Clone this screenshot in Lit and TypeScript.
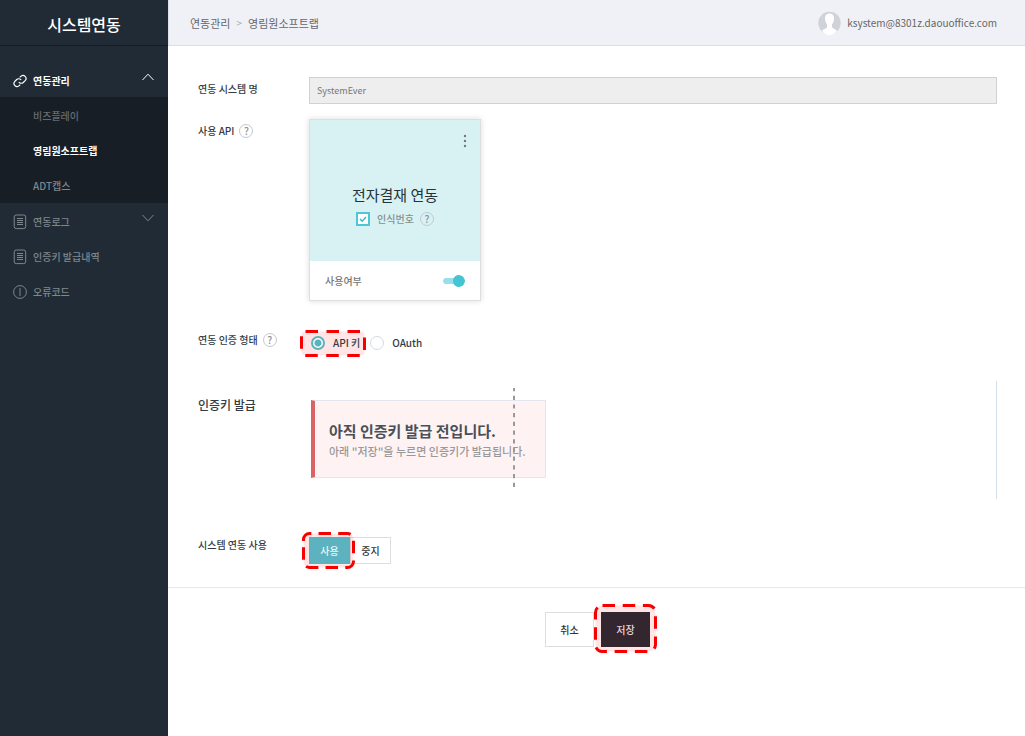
import { LitElement, html, css, svg } from "lit";
import { customElement, state } from "lit/decorators.js";

const docIcon = html`<svg class="ico" viewBox="0 0 14 16" width="14" height="16" aria-hidden="true">
  <rect x="1.2" y="1" width="11.5" height="13.6" rx="2"></rect>
  <path d="M4 4.500h6M4 6.500h6M4 8.500h6M4 10.500h6"></path></svg>`;

const linkIcon = html`<svg class="ico" viewBox="0 0 24 24" width="14" height="14" aria-hidden="true" stroke-width="2">
  <path d="M10 14a5.2 5.2 0 0 0 7.6.5l3.6-3.6a5.2 5.2 0 0 0-7.3-7.3l-2.4 2.3"></path>
  <path d="M14 10a5.2 5.2 0 0 0-7.6-.5l-3.6 3.6a5.2 5.2 0 0 0 7.3 7.3l2.4-2.3"></path></svg>`;

const errorIcon = html`<svg class="ico" viewBox="0 0 14 16" width="14" height="16" aria-hidden="true">
  <circle cx="7" cy="8" r="6.4"></circle><path d="M7 4v8"></path></svg>`;

const chevron = (up: boolean) => html`<svg class="chev" viewBox="0 0 12 8" width="12" height="8" aria-hidden="true">
  <path d=${up ? "M.5 7L6 1.2 11.5 7" : "M.5 1L6 6.8 11.5 1"}></path></svg>`;

// Dashed marker around a control: the outline may start on the left side or on the top side.
const ring = (w: number, h: number, r: number, start: "left" | "top", dash: string) => {
  const a = 1.5, x = w - 1.5, y = h - 1.5;
  const arc = (ex: number, ey: number) => `A${r} ${r} 0 0 1 ${ex} ${ey}`;
  const corner = `V${a + r}${arc(a + r, a)}`;
  const rest = `H${x - r}${arc(x, a + r)}V${y - r}${arc(x - r, y)}H${a + r}${arc(a, y - r)}`;
  const d = start === "left" ? `M${a} 9${corner}${rest}V9` : `M${a + r} ${a}${rest}${corner}`;
  return html`<svg class="ring" viewBox="0 0 ${w} ${h}" width=${w} height=${h} aria-hidden="true">${svg`
    <path d=${d} stroke-dasharray=${dash}></path>`}</svg>`;
};

@customElement("app-root")
export class AppRoot extends LitElement {
  @state() private system = "on";

  static styles = css`
    :host {
      display: block;
      font-family: "Noto Sans CJK KR", "Noto Sans", sans-serif;
      font-size: 10px;
      line-height: 16px;
      font-weight: 500;
      color: #333c46;
    }
    * { box-sizing: border-box; }
    button, input { font: inherit; margin: 0; }
    a { color: inherit; text-decoration: none; }
    h1, h2, p, ul { margin: 0; padding: 0; font-weight: inherit; }
    ul { list-style: none; }
    .page { display: grid; grid-template-columns: 168px 1fr; min-height: 100vh; }
    .side { background: #202b36; color: #7f878d; }
    .brand {
      height: 46px; padding-top: 3px; display: flex; align-items: center; justify-content: center;
      font-size: 16px; line-height: 24px; color: #fff; border-bottom: 1px solid #141c25;
    }
    .menu { padding-top: 16px; }
    .menu a { display: flex; align-items: center; gap: 6px; height: 35px; padding: 3px 14px 0 13px; }
    .menu .sub { padding-bottom: 1px; background: #171e26; }
    .menu .sub a { padding-left: 33px; }
    .menu .dim { color: #666c73; }
    .menu .on { color: #fff; font-weight: 700; }
    .ico { fill: none; stroke: currentColor; flex: none; }
    .chev { fill: none; stroke: currentColor; margin: 0 0 9px auto; }
    .top {
      height: 46px; padding: 0 28px 0 21px; display: flex; align-items: center; justify-content: space-between;
      background: #f0f1f7; border-bottom: 1px solid #dadeea; border-left: 1px solid #dfe2ea;
    }
    .crumbs { display: flex; gap: 6px; font-size: 11px; color: #62666e; font-weight: 400; }
    .crumbs i { font-style: normal; color: #aaa; font-size: 10px; }
    .user { display: flex; align-items: center; gap: 6px; color: #666; font-weight: 400; }
    .form { padding: 31px 28px 0 30px; }
    .row { display: grid; grid-template-columns: 111px 1fr; }
    .name { display: flex; align-items: center; gap: 5px; height: 24px; }
    .help {
      width: 14px; height: 14px; padding: 0; border: 1px solid #c4c8d2; border-radius: 50%; background: none;
      color: #8e9299; font-size: 10px; line-height: 12px; text-align: center;
    }
    .text {
      width: 100%; height: 27px; padding: 0 7px; border: 1px solid #d2d2d2; border-radius: 0;
      background: #eee; color: #777; font-size: 9px; font-weight: 400;
    }
    .api { margin-top: 15px; }
    .card { width: 172px; border: 1px solid #dcdfe2; box-shadow: 0 0 6px rgba(0, 0, 0, .14); background: #fff; }
    .face { height: 141px; background: #d8f2f4; display: flex; flex-direction: column; align-items: center; }
    .more { align-self: flex-end; border: 0; background: none; padding: 13px 12px 0; height: 63px; display: flex; }
    .face h2 { font-size: 15px; line-height: 24px; font-weight: 400; color: #26313a; }
    .check { display: flex; align-items: center; gap: 6px; height: 24px; color: #85908f; }
    .check label { display: flex; align-items: center; gap: 7px; }
    .tick {
      appearance: none; width: 14px; height: 14px; border: 2px solid #4cc7d6;
      background: #fff url('data:image/svg+xml,<svg xmlns="http://www.w3.org/2000/svg" viewBox="0 0 10 10"><path d="M2 5l2.2 2.2L8 3" fill="none" stroke="%2334bccd" stroke-width="1.5"/></svg>') center / 10px;
    }
    .use { display: flex; align-items: center; justify-content: space-between; height: 39px; padding: 0 15px; color: #777; }
    .switch {
      appearance: none; width: 22px; height: 12px; border-radius: 6px;
      background:
        radial-gradient(circle at 16px 6px, #43c5d4 5.6px, transparent 6.4px),
        linear-gradient(#96e1e9, #96e1e9) 3px 3px / 12px 6px no-repeat,
        radial-gradient(circle at 3px 6px, #96e1e9 2.7px, transparent 3.3px);
    }
    .auth { margin-top: 27px; }
    .radios { display: flex; align-items: center; height: 27px; margin-top: 1px; padding-left: 2px; gap: 10px; }
    .radios label { display: flex; align-items: center; gap: 8px; height: 20px; }
    .mark { position: relative; z-index: 1; display: flex; }
    .ring {
      position: absolute; z-index: -1; pointer-events: none; overflow: visible;
      fill: rgba(255, 0, 0, .1); stroke: #f80000; stroke-width: 3;
    }
    .radios .ring { left: -11px; top: -3px; }
    .radio {
      appearance: none; width: 14px; height: 14px; padding: 2px; border: 1px solid #d5d9df; border-radius: 50%; background: #fff;
    }
    .radio:checked { border: 2px solid #5bb3be; background: radial-gradient(circle at center, #5bb3be 3px, #fff 4px) border-box; }
    .issue { margin-top: 25px; height: 118px; padding-top: 12px; border-right: 1px solid #d3e0ea; }
    .issue .name { font-size: 12px; }
    .notice {
      position: relative; justify-self: start; margin: 7px 0 0 2px; width: 235px; height: 78px; padding: 19px 0 0 14px;
      background: #fff2f2; border: 1px solid #e2e6ee; border-left: 4px solid #dc6363;
    }
    .notice h2 { font-size: 15px; line-height: 22px; font-weight: 700; color: #4a5058; }
    .notice p { font-size: 11px; line-height: 18px; color: #999; }
    .guide { position: absolute; left: 198px; top: -13px; stroke: #999; stroke-width: 2; }
    .system { margin-top: 34px; }
    .seg { display: flex; margin-top: 4px; }
    .seg button { width: 41px; height: 27px; padding: 0; border: 1px solid #dedede; background: #fff; color: #333; }
    .seg .mark button { background: #5cb3bf; border-color: #5cb3bf; color: #e8f6f7; }
    .seg .ring { left: -7px; top: -5px; }
    .actions {
      margin-top: 23px; padding: 24px 0 24px 2px; border-top: 1px solid #e8e8e8;
      display: flex; justify-content: center; gap: 7px;
    }
    .actions button { width: 49px; height: 35px; padding: 0; border: 1px solid #dedede; background: #fff; color: #333; }
    .actions .mark button { background: #33262f; border-color: #33262f; color: #ead9de; }
    .actions .ring { left: -7px; top: -8px; }
  `;

  render() {
    return html`<div class="page">
      <nav class="side">
        <h1 class="brand">시스템연동</h1>
        <ul class="menu">
          <li><a class="on" href="#">${linkIcon}연동관리${chevron(true)}</a>
            <ul class="sub">
              <li><a class="dim" href="#">비즈플레이</a></li>
              <li><a class="on" href="#">영림원소프트랩</a></li>
              <li><a href="#">ADT캡스</a></li>
            </ul></li>
          <li><a href="#">${docIcon}연동로그${chevron(false)}</a></li>
          <li><a href="#">${docIcon}인증키 발급내역</a></li>
          <li><a href="#">${errorIcon}오류코드</a></li>
        </ul>
      </nav>
      <main>
        <header class="top">
          <div class="crumbs"><span>연동관리</span><i>&gt;</i><span>영림원소프트랩</span></div>
          <div class="user">
            <svg viewBox="0 0 23 24" width="23" height="24" aria-hidden="true">
              <circle cx="11.5" cy="12" r="11.2" fill="#cfd3d9"></circle>
              <path fill="#fff" d="M11.5 2.500c3 0 4.600 2.200 4.500 5.200-.1 2.600-1 4.300-2 5.600v2.900c1 1.500 3.800 1.900 4.900 3.600-1.700 2.600-4.300 4.200-7.400 4.200s-5.700-1.600-7.400-4.200c1.100-1.700 3.900-2.100 4.900-3.600v-2.900c-1-1.300-1.900-3-2-5.600-.1-3 1.500-5.200 4.500-5.200z"></path>
            </svg><span>ksystem@8301z.daouoffice.com</span>
          </div>
        </header>
        <form @submit=${(e: Event) => e.preventDefault()}>
          <div class="form">
            <div class="row">
              <label class="name" for="sys">연동 시스템 명</label>
              <input class="text" id="sys" value="SystemEver" readonly />
            </div>
            <div class="row api">
              <div class="name">사용 API <button class="help" type="button">?</button></div>
              <div class="card">
                <div class="face">
                  <button class="more" type="button" aria-label="menu"><svg viewBox="0 0 6 16" width="6" height="16" fill="#777">
                    <circle cx="3" cy="3" r="1.2"></circle><circle cx="3" cy="8" r="1.2"></circle><circle cx="3" cy="13" r="1.2"></circle></svg></button>
                  <h2>전자결재 연동</h2>
                  <div class="check"><label><input class="tick" type="checkbox" checked />인식번호</label>
                    <button class="help" type="button">?</button></div>
                </div>
                <label class="use">사용여부<input class="switch" type="checkbox" role="switch" checked /></label>
              </div>
            </div>
            <div class="row auth">
              <div class="name">연동 인증 형태 <button class="help" type="button">?</button></div>
              <div class="radios">
                <span class="mark"><label><input class="radio" type="radio" name="auth" checked />API 키</label>
                  ${ring(66, 27, 4, "top", "12.5 8.5")}</span>
                <label><input class="radio" type="radio" name="auth" />OAuth</label>
              </div>
            </div>
            <div class="row issue">
              <div class="name">인증키 발급</div>
              <div class="notice">
                <h2>아직 인증키 발급 전입니다.</h2>
                <p>아래 "저장"을 누르면 인증키가 발급됩니다.</p>
                <svg class="guide" viewBox="0 0 2 100" width="2" height="100" aria-hidden="true"><path d="M1 0v99" stroke-dasharray="4.200 4.500" stroke-dashoffset="1"></path></svg>
              </div>
            </div>
            <div class="row system">
              <div class="name">시스템 연동 사용</div>
              <div class="seg">
                <span class="mark"><button type="button" aria-pressed=${this.system === "on"} @click=${() => (this.system = "on")}>사용</button>
                  ${ring(53, 37, 6, "left", "12.5 7.2")}</span>
                <button type="button" aria-pressed=${this.system === "off"} @click=${() => (this.system = "off")}>중지</button>
              </div>
            </div>
          </div>
          <div class="actions">
            <button type="button">취소</button>
            <span class="mark"><button type="submit">저장</button>${ring(63, 49, 7, "top", "12.5 7.7")}</span>
          </div>
        </form>
      </main>
    </div>`;
  }
}
